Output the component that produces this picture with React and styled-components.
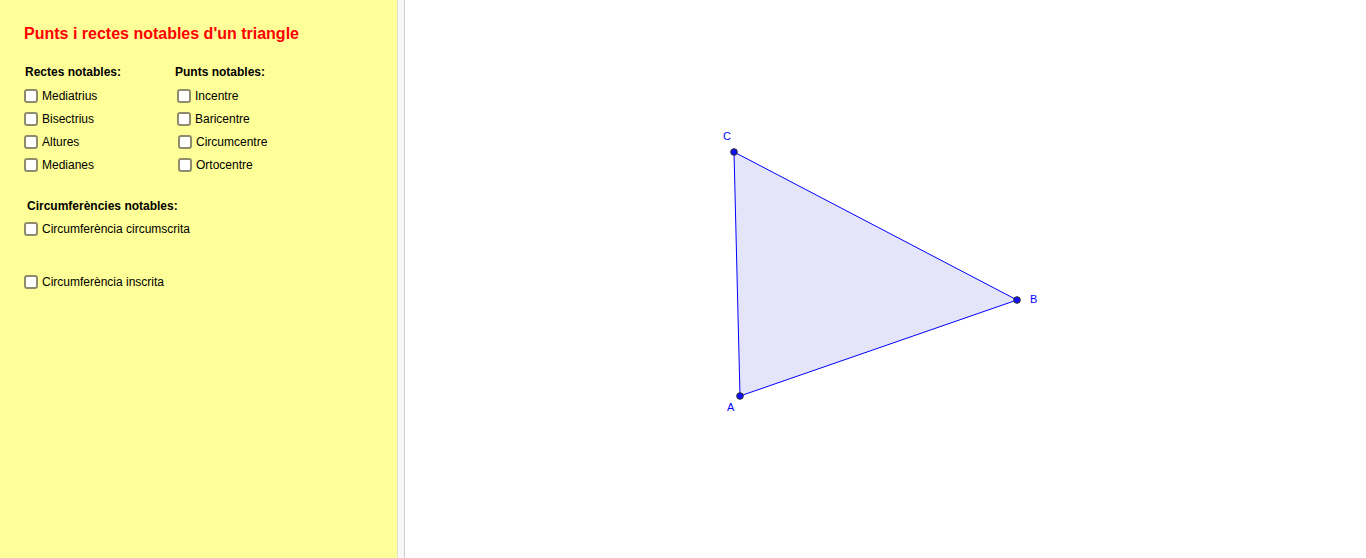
import React from 'react';
import styled, { createGlobalStyle } from 'styled-components';

const GlobalStyle = createGlobalStyle`
  html, body {
    margin: 0;
    padding: 0;
    background: #ffffff;
    font-family: "Liberation Sans", Arial, sans-serif;
  }
`;

const Page = styled.div`
  display: flex;
  width: 100%;
  height: 100vh;
  overflow: hidden;
`;

const Panel = styled.div`
  width: 397px;
  flex-shrink: 0;
  background: #ffff99;
  padding: 25px 0 0 24px;
  box-sizing: border-box;
`;

const Divider = styled.div`
  width: 6px;
  flex-shrink: 0;
  background: #f7f7f9;
  border-left: 1px solid #e2e2d0;
  border-right: 1px solid #cfcfcf;
`;

const Canvas = styled.div`
  flex: 1;
  position: relative;
  background: #ffffff;
`;

const Title = styled.h1`
  margin: 0;
  font-size: 16px;
  font-weight: bold;
  color: #ff0000;
  line-height: 18px;
`;

const Columns = styled.div`
  display: flex;
  margin-top: 22px;
`;

const Column = styled.div`
  width: ${(p) => p.$width || 'auto'};
  display: flex;
  flex-direction: column;
`;

const Heading = styled.div`
  font-size: 12px;
  font-weight: bold;
  color: #000;
  line-height: 14px;
  padding-left: ${(p) => (p.$indent !== undefined ? p.$indent : 1)}px;
  margin-bottom: ${(p) => p.$gap || 10}px;
`;

const Row = styled.label`
  display: flex;
  align-items: center;
  height: 14px;
  margin-bottom: ${(p) => (p.$gap !== undefined ? p.$gap : 9)}px;
  padding-left: ${(p) => p.$indent || 0}px;
  font-size: 12px;
  color: #000;
  cursor: pointer;
`;

const Box = styled.span`
  width: 14px;
  height: 14px;
  box-sizing: border-box;
  border: 2px solid #8e8c6c;
  border-radius: 3px;
  background: #ffffff;
  margin-right: 4px;
  flex-shrink: 0;
`;

const Section = styled.div`
  margin-top: 18px;
`;

const Drawing = styled.svg`
  display: block;
  width: 100%;
  height: 100%;
`;

const Check = ({ children, ...rest }) => (
  <Row {...rest}>
    <Box />
    <span>{children}</span>
  </Row>
);

const pts = {
  A: [335, 396],
  B: [612, 300],
  C: [329, 152],
};

const Triangle = () => {
  const poly = [pts.A, pts.B, pts.C].map((p) => p.join(',')).join(' ');
  return (
    <Drawing>
      <polygon points={poly} fill="#e5e5fa" stroke="none" />
      <line x1={pts.A[0]} y1={pts.A[1]} x2={pts.B[0]} y2={pts.B[1]} stroke="#0000ff" strokeWidth="1" />
      <line x1={pts.B[0]} y1={pts.B[1]} x2={pts.C[0]} y2={pts.C[1]} stroke="#0000ff" strokeWidth="1" />
      <line x1={pts.C[0]} y1={pts.C[1]} x2={pts.A[0]} y2={pts.A[1]} stroke="#0000ff" strokeWidth="1" />
      {Object.values(pts).map(([x, y], i) => (
        <circle key={i} cx={x} cy={y} r="3.3" fill="#1010ff" stroke="#2a2a2a" strokeWidth="1" />
      ))}
      <g fill="#0000ff" fontFamily='"Liberation Sans", Arial, sans-serif' fontSize="11">
        <text x="318" y="140">C</text>
        <text x="625" y="303">B</text>
        <text x="322" y="411">A</text>
      </g>
    </Drawing>
  );
};

const App = () => (
  <>
    <GlobalStyle />
    <Page>
      <Panel>
        <Title>Punts i rectes notables d'un triangle</Title>
        <Columns>
          <Column $width="151px">
            <Heading>Rectes notables:</Heading>
            <Check>Mediatrius</Check>
            <Check>Bisectrius</Check>
            <Check>Altures</Check>
            <Check>Medianes</Check>
          </Column>
          <Column>
            <Heading $indent={0}>Punts notables:</Heading>
            <Check $indent={2}>Incentre</Check>
            <Check $indent={2}>Baricentre</Check>
            <Check $indent={3}>Circumcentre</Check>
            <Check $indent={3}>Ortocentre</Check>
          </Column>
        </Columns>
        <Section>
          <Heading $indent={3} $gap={9}>Circumferències notables:</Heading>
          <Check $gap={39}>Circumferència circumscrita</Check>
          <Check>Circumferència inscrita</Check>
        </Section>
      </Panel>
      <Divider />
      <Canvas>
        <Triangle />
      </Canvas>
    </Page>
  </>
);

export default App;
